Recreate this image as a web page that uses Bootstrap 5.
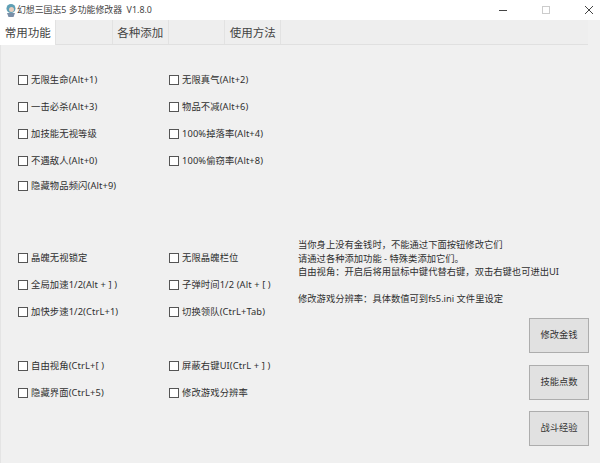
<!DOCTYPE html>
<html lang="zh-CN">
<head>
  <meta charset="UTF-8" />
  <title>幻想三国志5 多功能修改器</title>
  <link href="https://cdn.jsdelivr.net/npm/bootstrap@5.3.0/dist/css/bootstrap.min.css" rel="stylesheet"/>
  <style>
    html, body { height: 100%; }
    body { font-family: "Noto Sans", "Noto Sans CJK SC", sans-serif; font-size: 9.3px; color: #2f2f2f; background: #f0f0f0; overflow: hidden; }
    .app-win { width: 600px; height: 463px; }
    .title-bar { height: 20px; background: #fff; font-size: 8.9px; color: #444; }
    .app-icon { margin-left: 5px; flex: none; }
    .win-btns { gap: 33px; padding-right: 6px; }
    .tab-strip { height: 25px; background: #eee; border-bottom: 1px solid #e0e0e0; margin-right: 12px; }
    .tab-item { width: 56.3px; height: 24px; border-right: 1px solid #e2e2e2; font-size: 11.5px; line-height: 25px; color: #444; text-align: center; white-space: nowrap; }
    .tab-item.is-active { background: #fff; height: 25px; }
    .body-wrap { height: 418px; border-left: 1px solid #e4e4e4; }
    .left-pane { width: 289px; flex: none; padding: 21px 0 0 17px; }
    .opt-row { height: 27px; }
    #group-a .opt-row:nth-child(5) { margin-top: -2px; }
    .opt-gap-a { margin-top: 45px; }
    .opt-gap-b { margin-top: 27px; }
    .opt-cell { width: 151px; flex: none; gap: 3px; white-space: nowrap; letter-spacing: .12px; }
    .opt-box { width: 10px; height: 10px; border: 1px solid #555; background: #fff; flex: none; }
    .right-pane { padding-top: 193px; padding-right: 11px; min-width: 0; }
    .note-text { margin-left: 8px; }
    .note-text div { height: 13.5px; line-height: 13.5px; white-space: nowrap; }
    .btn-stack { margin-top: 12px; }
    .tool-btn { width: 60px; height: 35px; background: #e1e1e1; border: 1px solid #adadad; color: #333; font-size: 9.3px; padding: 0; border-radius: 0; }
    .btn-gap { margin-top: 12px; }
    .btn-gap-lg { margin-top: 11px; }
  </style>
</head>
<body>
  <div class="app-win d-flex flex-column">
    <div class="title-bar d-flex align-items-center">
      <svg class="app-icon" width="12" height="15" viewBox="0 0 12 15">
        <circle cx="6" cy="5.5" r="4.5" fill="#5f9fb5"/>
        <circle cx="6.5" cy="6.5" r="2.5" fill="#e8cdbd"/>
        <path d="M2 10 L10 10 L8.5 14 L3.5 14 Z" fill="#7a8fa8"/>
      </svg>
      <span class="flex-grow-1">幻想三国志5 多功能修改器&nbsp; V1.8.0</span>
      <div class="win-btns d-flex align-items-center">
        <svg width="10" height="10" viewBox="0 0 10 10"><path d="M1 5.5H9" stroke="#444" stroke-width="1"/></svg>
        <svg width="10" height="10" viewBox="0 0 10 10"><rect x="1.5" y="1.5" width="7" height="7" fill="none" stroke="#ccc"/></svg>
        <svg width="10" height="10" viewBox="0 0 10 10"><path d="M1 1L9 9M9 1L1 9" stroke="#444" stroke-width="1"/></svg>
      </div>
    </div>
    <div class="tab-strip d-flex">
      <div class="tab-item is-active">常用功能</div>
      <div class="tab-item"></div>
      <div class="tab-item">各种添加</div>
      <div class="tab-item"></div>
      <div class="tab-item">使用方法</div>
    </div>
    <div class="body-wrap d-flex">
      <div class="left-pane">
        <div id="group-a"></div>
        <div id="group-b" class="opt-gap-a"></div>
        <div id="group-c" class="opt-gap-b"></div>
      </div>
      <div class="right-pane flex-grow-1 d-flex flex-column">
        <div class="note-text">
          <div>当你身上没有金钱时，不能通过下面按钮修改它们</div>
          <div>请通过各种添加功能 - 特殊类添加它们。</div>
          <div>自由视角：开启后将用鼠标中键代替右键，双击右键也可进出UI</div>
          <div></div>
          <div>修改游戏分辨率：具体数值可到fs5.ini 文件里设定</div>
        </div>
        <div class="btn-stack d-flex flex-column align-items-end">
          <button class="tool-btn">修改金钱</button>
          <button class="tool-btn btn-gap">技能点数</button>
          <button class="tool-btn btn-gap-lg">战斗经验</button>
        </div>
      </div>
    </div>
  </div>
  <script src="https://cdn.jsdelivr.net/npm/bootstrap@5.3.0/dist/js/bootstrap.bundle.min.js"></script>
  <script>
    const groups = {
      "group-a": [
        ["无限生命(Alt+1)", "无限真气(Alt+2)"],
        ["一击必杀(Alt+3)", "物品不减(Alt+6)"],
        ["加技能无视等级", "100%掉落率(Alt+4)"],
        ["不遇敌人(Alt+0)", "100%偷窃率(Alt+8)"],
        ["隐藏物品频闪(Alt+9)", ""]
      ],
      "group-b": [
        ["晶魄无视锁定", "无限晶魄栏位"],
        ["全局加速1/2(Alt + ] )", "子弹时间1/2 (Alt + [ )"],
        ["加快步速1/2(CtrL+1)", "切换领队(CtrL+Tab)"]
      ],
      "group-c": [
        ["自由视角(CtrL+[ )", "屏蔽右键UI(CtrL + ] )"],
        ["隐藏界面(CtrL+5)", "修改游戏分辨率"]
      ]
    };
    const cell = t => t ? `<div class="opt-cell d-flex align-items-center"><span class="opt-box"></span><span>${t}</span></div>` : "";
    Object.keys(groups).forEach(id => {
      document.getElementById(id).innerHTML = groups[id]
        .map(r => `<div class="opt-row d-flex align-items-center">${cell(r[0])}${cell(r[1])}</div>`).join("");
    });
  </script>
</body>
</html>
